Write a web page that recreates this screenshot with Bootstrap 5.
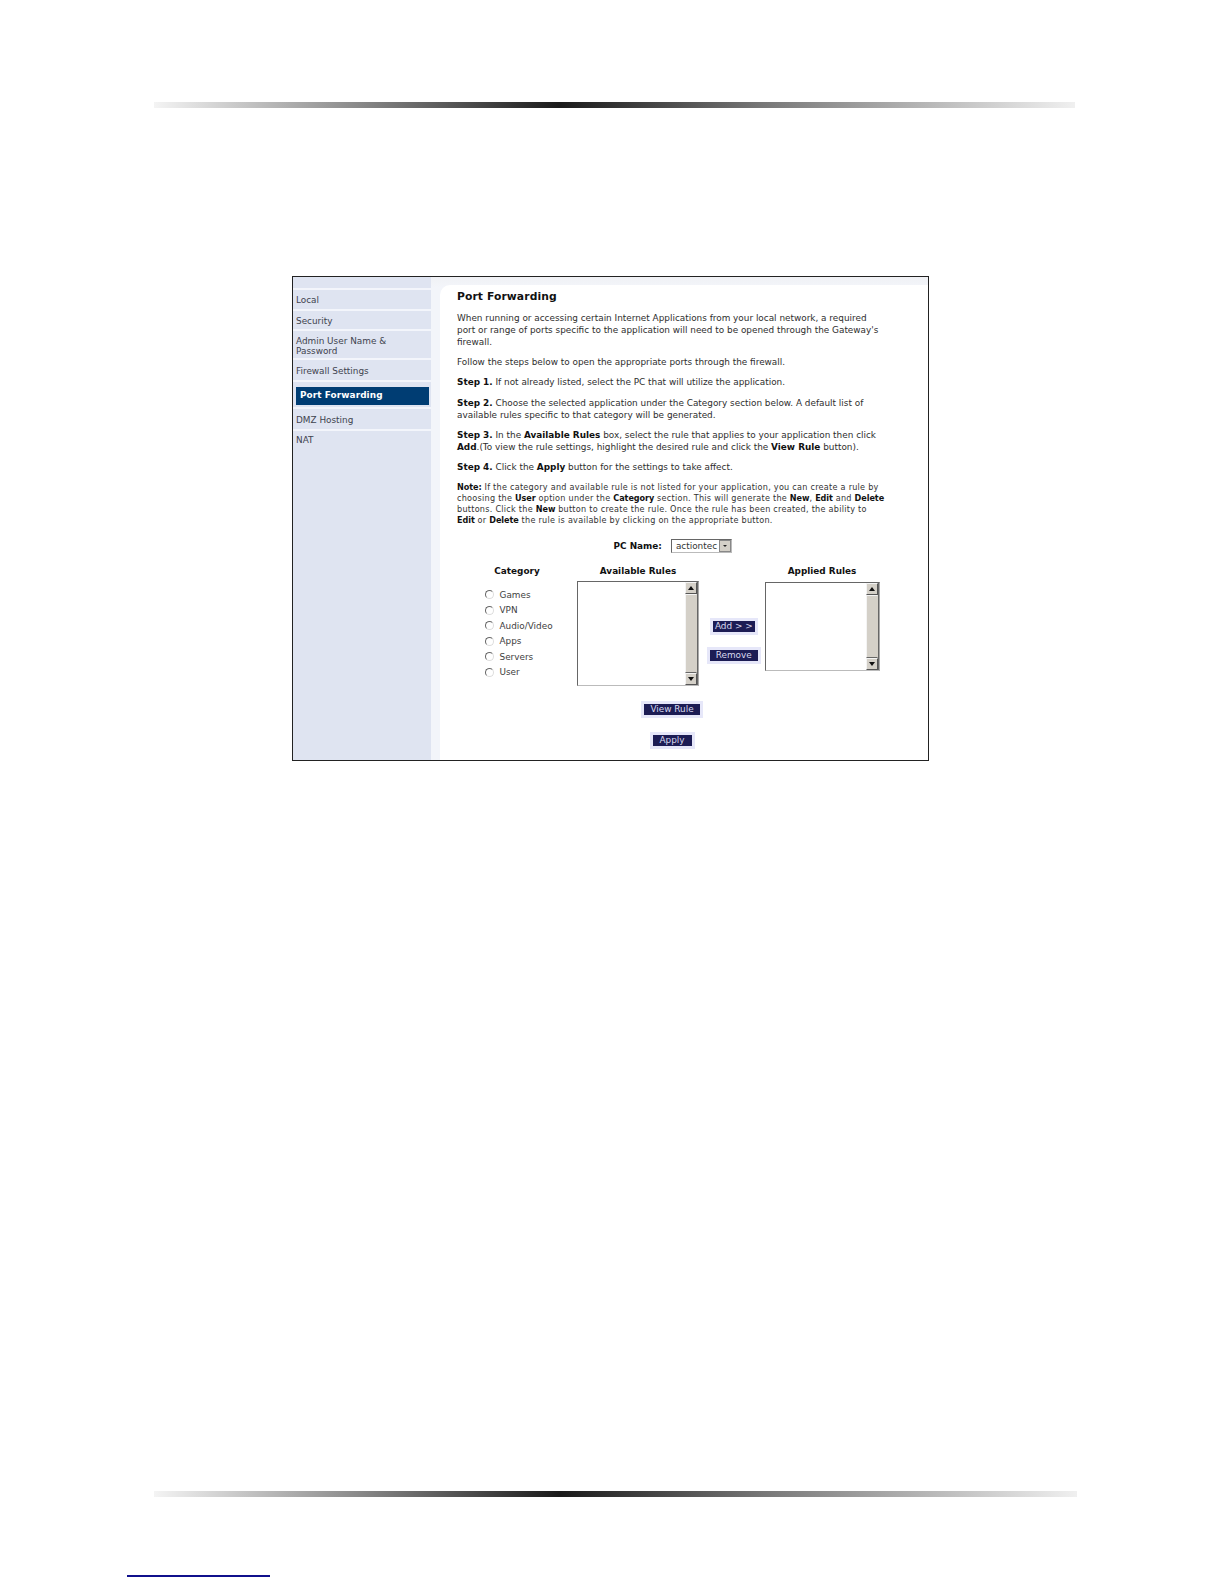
<!DOCTYPE html>
<html lang="en">
<head>
<meta charset="utf-8">
<title>Port Forwarding</title>
<link href="https://cdn.jsdelivr.net/npm/bootstrap@5.3.0/dist/css/bootstrap.min.css" rel="stylesheet">
<style>
html,body{margin:0;background:#fff}
body{width:1224px;height:1584px;overflow:hidden;font-family:"DejaVu Sans","Liberation Sans",sans-serif;font-size:8.88px;line-height:12px;color:#2e2e2e}
b{font-weight:700;color:#111}
.fade-rule{height:6px;background:linear-gradient(90deg,#f4f4f4 0,#8a8a8a 22%,#1a1a1a 44%,#777 66%,#f0f0f0 100%)}
.rule-top{margin:102px 0 0 154px;width:921px}
.rule-bottom{margin:730px 0 0 154px;width:923px}
.foot-link{margin:78px 0 0 127px;width:143px;height:2px;background:#10108c}
.shot{margin:168px 0 0 292px;width:637px;height:485px;border:1px solid #222;background:#fff}
.side{width:138px;background:#dfe4f1;flex:none}
.side-top{height:13px;border-bottom:2px solid #f3f5fb}
.side-item{display:block;background:transparent;border:0;border-bottom:2px solid #f3f5fb;border-radius:0;padding:0 0 0 3px;color:#3e434e;line-height:10px}
.h21{height:21px;padding-top:5px}
.h20{height:20px;padding-top:5px}
.h29{height:29px;padding-top:5px}
.h22{height:22px;padding-top:6px}
.h22n{height:22px;padding-top:4px}
.side-act{height:27px;padding:5px 2px 0 3px}
.side-act span{display:block;height:18px;background:#003d73;color:#fff;font-weight:700;line-height:17px;padding-left:4px;letter-spacing:.1px}
.pane-wrap{flex:1;background:linear-gradient(#f0f1f5,#f3f5fa 10px);padding:8px 0 0 9px;min-width:0}
.pane{height:100%;background:#fff;border-top-left-radius:10px;padding:5px 0 0 17px;white-space:nowrap}
.pane h1{font-size:10.75px;line-height:14px;font-weight:700;margin:0 0 8px;color:#111;letter-spacing:.1px}
.pane p{margin:0 0 8.2px}
.pane p.fine{font-size:8.1px;line-height:11px;letter-spacing:.26px;margin:0;padding-top:1px;color:#333}
.pane p.fine b{letter-spacing:-.05px}
.pcline{width:432px;margin-top:12.4px;height:14px;gap:9px}
.fake-select{width:61.5px;height:14px;border:1px solid #777;border-color:#666 #bbb #bbb #666;padding-left:4px;line-height:13px;position:relative;color:#333}
.sel-btn{position:absolute;right:0;top:0;width:12px;height:12px;background:#d4d0c8;border:1px solid #888;display:flex;align-items:center;justify-content:center}
.cols{margin-top:12px}
.cat-col{width:120px;flex:none}
.col-title{text-align:center;font-weight:700;color:#111;height:12px;line-height:12px}
.cat-list{margin:12.5px 0 0 28px;display:flex;flex-direction:column;gap:3.75px}
.cat-row{display:flex;align-items:center;height:11.7px;gap:5.5px;color:#3e3e3e}
.radio-dot{appearance:none;width:9px;height:9px;margin:0;flex:none;border:1px solid #777;border-color:#666 #ddd #ddd #666;border-radius:50%;background:#fff}
.list-col{flex:none}
.w122{width:122px}
.w115{width:115px}
.lbox{margin-top:4px;border:1px solid;border-color:#666 #aaa #bbb #666;background:#fff;display:flex;justify-content:flex-end}
.h105{height:105px}
.h89{height:89px;margin-top:5px}
.sbar{width:13px;background:#d4d0c8;display:flex;flex-direction:column;border:1px solid #666;border-width:0 1px 0 0}
.sarrow{height:12px;flex:none;background:#d4d0c8;border:1px solid #666;border-color:#f4f4f4 #555 #555 #f4f4f4;display:flex;align-items:center;justify-content:center}
.sthumb{flex:1;background:#d4d0c8;border:1px solid;border-color:#f4f4f4 #d4d0c8 #666 #f4f4f4}
.mid-col{width:65.5px;flex:none;display:flex;flex-direction:column;align-items:center}
.navy-btn{background:#1c1c54;border:3px solid #e6e7f9;border-radius:0;padding:0;color:#d8d8ee;font-size:8.88px;line-height:11px;height:17px;--bs-btn-hover-bg:#1c1c54;--bs-btn-hover-color:#d8d8ee;--bs-btn-hover-border-color:#e6e7f9}
.b-add{width:48px;margin-top:53px;margin-left:4px}
.b-rem{width:54px;margin-top:12px;margin-left:4px}
.b-view{width:62px}
.b-apply{width:45px}
.w428{width:430px}
.view-row{margin-top:15px}
.apply-row{margin-top:14px}
</style>
</head>
<body>
<div class="fade-rule rule-top"></div>
<div class="shot d-flex">
  <nav class="side">
    <div class="side-top"></div>
    <div class="side-item h21">Local</div>
    <div class="side-item h20">Security</div>
    <div class="side-item h29">Admin User Name &amp;<br>Password</div>
    <div class="side-item h22">Firewall Settings</div>
    <div class="side-item side-act"><span>Port Forwarding</span></div>
    <div class="side-item h22">DMZ Hosting</div>
    <div class="side-item border-0 h22n">NAT</div>
  </nav>
  <div class="pane-wrap">
    <main class="pane">
      <h1>Port Forwarding</h1>
      <p>When running or accessing certain Internet Applications from your local network, a required<br>port or range of ports specific to the application will need to be opened through the Gateway's<br>firewall.</p>
      <p>Follow the steps below to open the appropriate ports through the firewall.</p>
      <p><b>Step 1.</b> If not already listed, select the PC that will utilize the application.</p>
      <p><b>Step 2.</b> Choose the selected application under the Category section below. A default list of<br>available rules specific to that category will be generated.</p>
      <p><b>Step 3.</b> In the <b>Available Rules</b> box, select the rule that applies to your application then click<br><b>Add</b>.(To view the rule settings, highlight the desired rule and click the <b>View Rule</b> button).</p>
      <p><b>Step 4.</b> Click the <b>Apply</b> button for the settings to take affect.</p>
      <p class="fine"><b>Note:</b> If the category and available rule is not listed for your application, you can create a rule by<br>choosing the <b>User</b> option under the <b>Category</b> section. This will generate the <b>New</b>, <b>Edit</b> and <b>Delete</b><br>buttons. Click the <b>New</b> button to create the rule. Once the rule has been created, the ability to<br><b>Edit</b> or <b>Delete</b> the rule is available by clicking on the appropriate button.</p>

      <div class="pcline d-flex justify-content-center align-items-center">
        <b>PC Name:</b>
        <div class="fake-select">actiontec
          <span class="sel-btn"><svg width="6" height="4" viewBox="0 0 6 4"><path d="M1 1h4L3 3z" fill="#222"/></svg></span>
        </div>
      </div>

      <div class="cols d-flex">
        <div class="cat-col">
          <div class="col-title">Category</div>
          <div class="cat-list">
            <label class="cat-row"><input class="radio-dot" type="radio" name="c">Games</label>
            <label class="cat-row"><input class="radio-dot" type="radio" name="c">VPN</label>
            <label class="cat-row"><input class="radio-dot" type="radio" name="c">Audio/Video</label>
            <label class="cat-row"><input class="radio-dot" type="radio" name="c">Apps</label>
            <label class="cat-row"><input class="radio-dot" type="radio" name="c">Servers</label>
            <label class="cat-row"><input class="radio-dot" type="radio" name="c">User</label>
          </div>
        </div>
        <div class="list-col w122">
          <div class="col-title">Available Rules</div>
          <div class="lbox h105">
            <div class="sbar">
              <div class="sarrow"><svg width="6" height="4" viewBox="0 0 6 4"><path d="M0 4h6L3 0z" fill="#111"/></svg></div>
              <div class="sthumb"></div>
              <div class="sarrow"><svg width="6" height="4" viewBox="0 0 6 4"><path d="M0 0h6L3 4z" fill="#111"/></svg></div>
            </div>
          </div>
        </div>
        <div class="mid-col">
          <button class="btn navy-btn b-add" type="button">Add &gt; &gt;</button>
          <button class="btn navy-btn b-rem" type="button">Remove</button>
        </div>
        <div class="list-col w115">
          <div class="col-title">Applied Rules</div>
          <div class="lbox h89">
            <div class="sbar">
              <div class="sarrow"><svg width="6" height="4" viewBox="0 0 6 4"><path d="M0 4h6L3 0z" fill="#111"/></svg></div>
              <div class="sthumb"></div>
              <div class="sarrow"><svg width="6" height="4" viewBox="0 0 6 4"><path d="M0 0h6L3 4z" fill="#111"/></svg></div>
            </div>
          </div>
        </div>
      </div>

      <div class="w428 view-row d-flex justify-content-center"><button class="btn navy-btn b-view" type="button">View Rule</button></div>
      <div class="w428 apply-row d-flex justify-content-center"><button class="btn navy-btn b-apply" type="button">Apply</button></div>
    </main>
  </div>
</div>
<div class="fade-rule rule-bottom"></div>
<div class="foot-link"></div>
<script src="https://cdn.jsdelivr.net/npm/bootstrap@5.3.0/dist/js/bootstrap.bundle.min.js"></script>
</body>
</html>
